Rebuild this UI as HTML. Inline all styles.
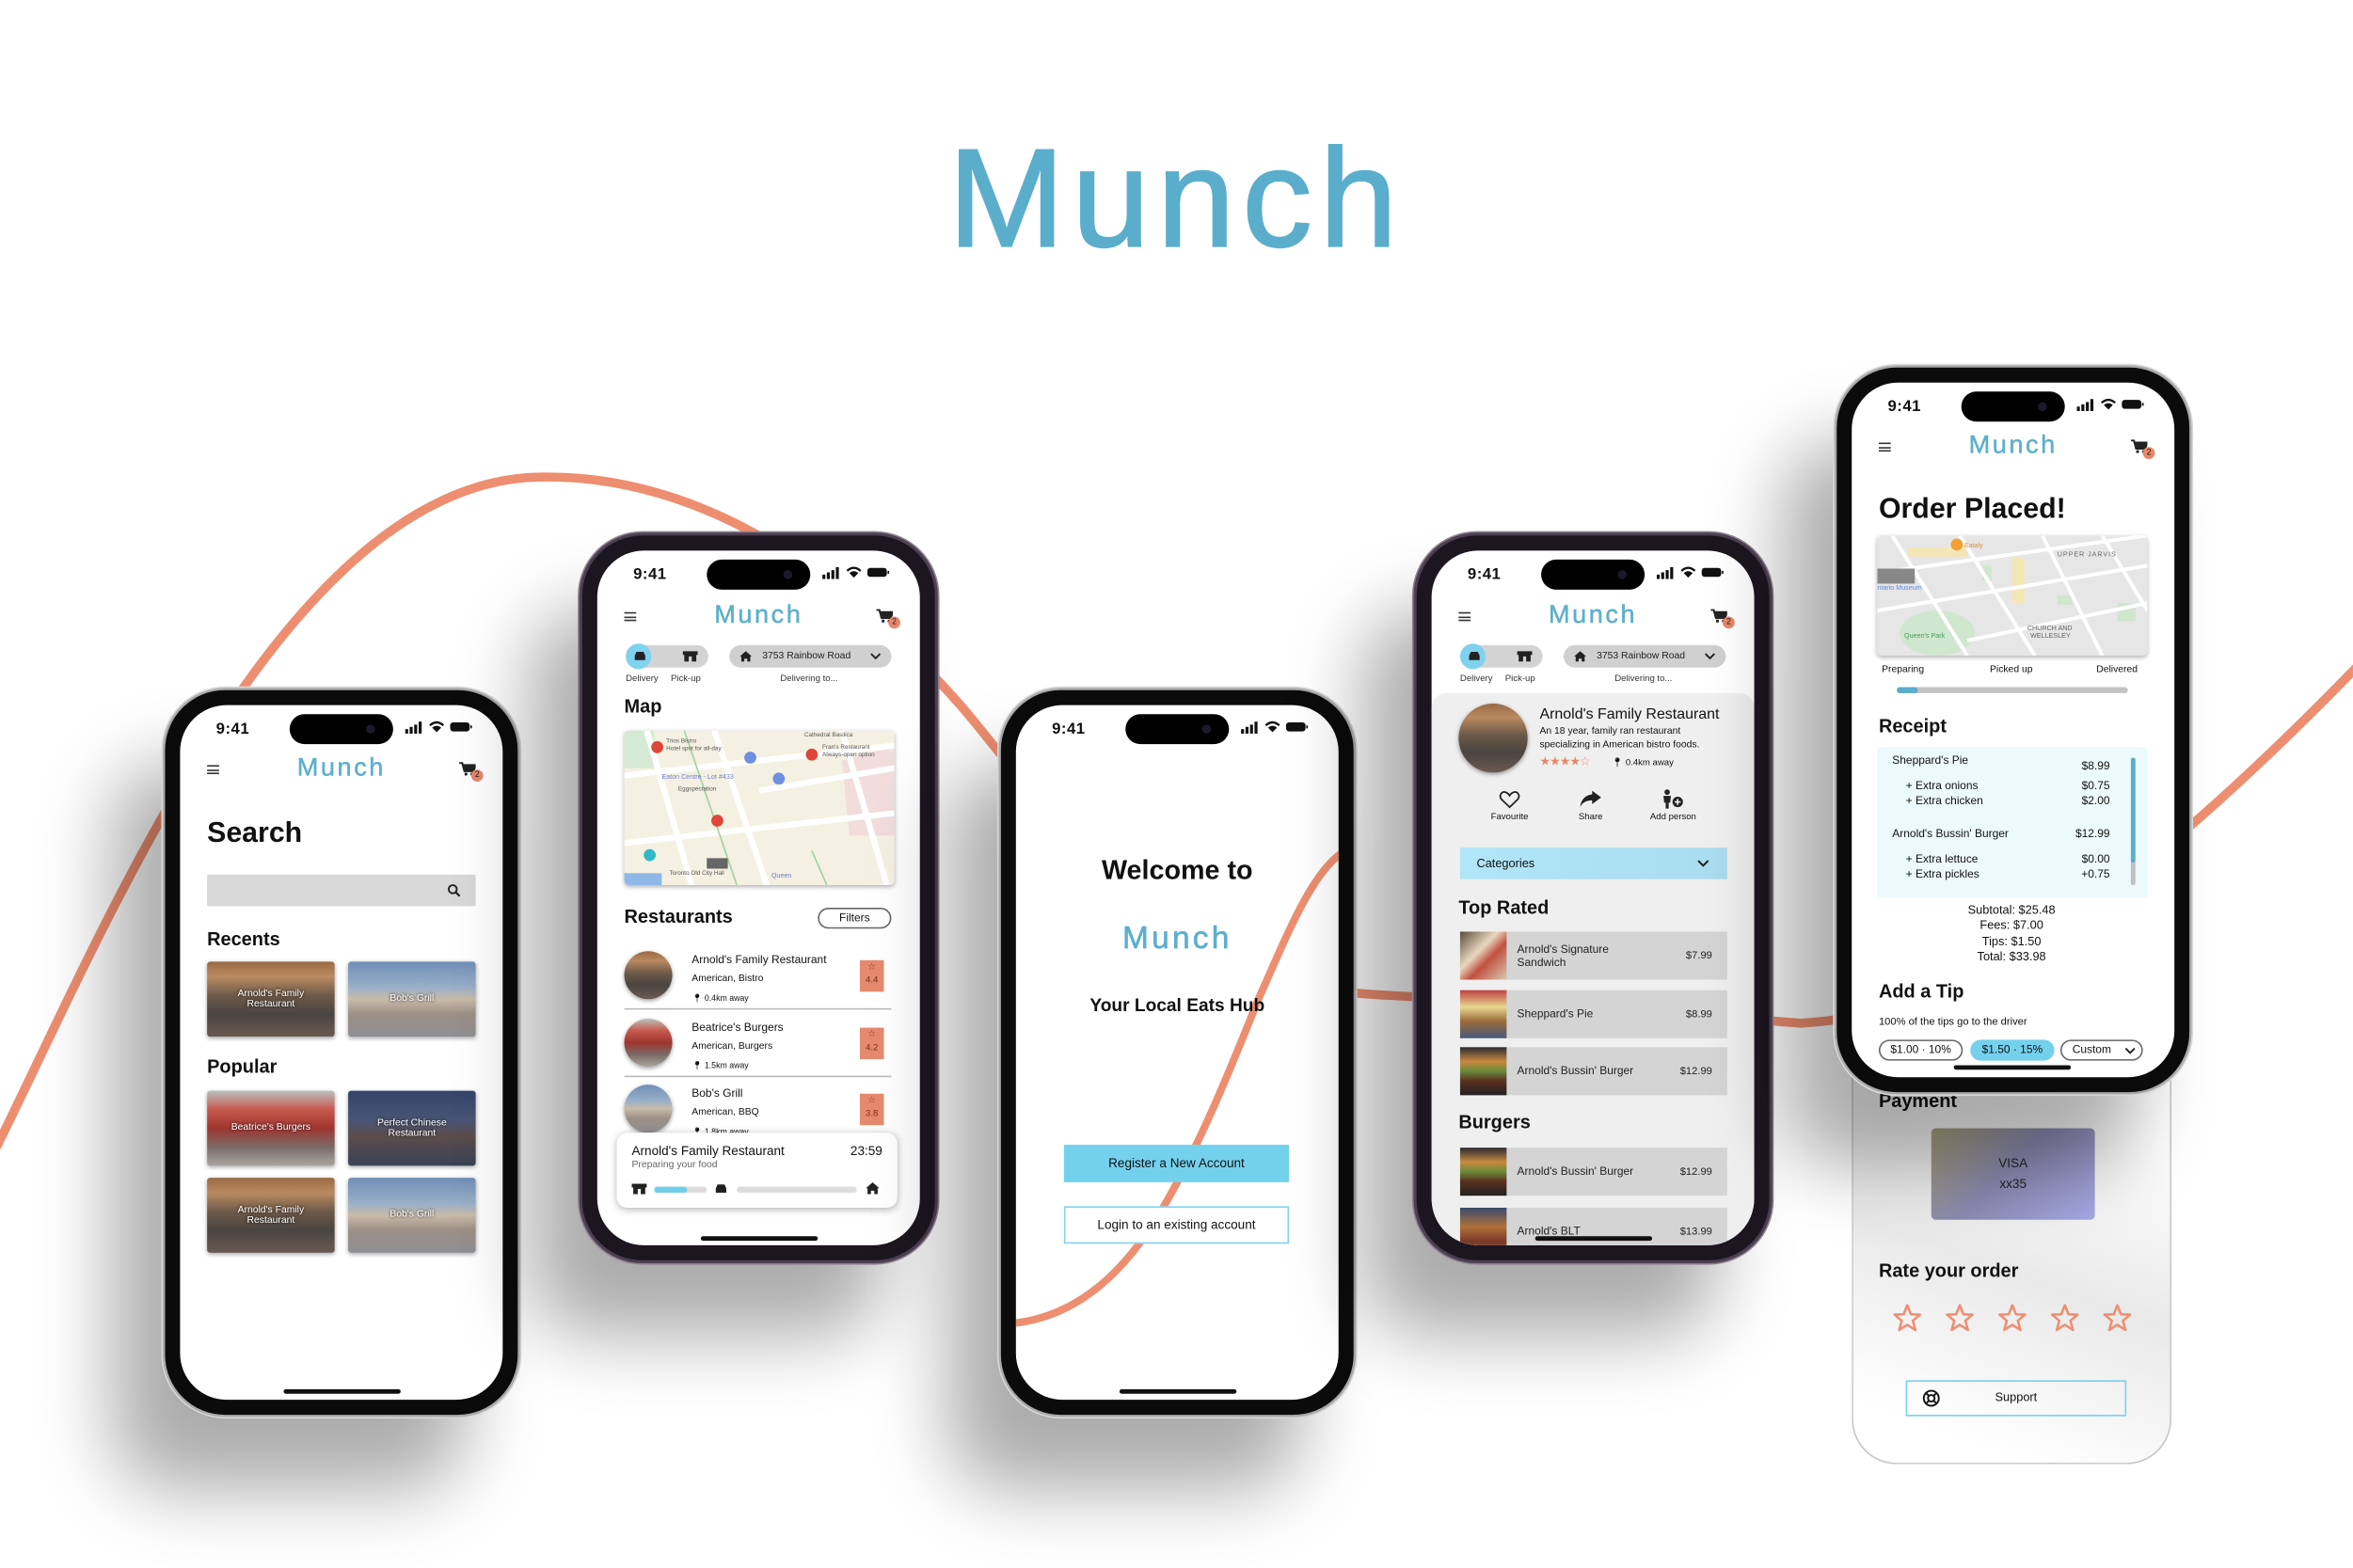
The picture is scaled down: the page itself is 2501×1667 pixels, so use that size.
<!DOCTYPE html>
<html><head><meta charset="utf-8">
<style>
*{margin:0;padding:0;box-sizing:border-box}
html,body{width:2501px;height:1667px;overflow:hidden;background:#fff}
body{font-family:"Liberation Sans",sans-serif;color:#111}
#w{position:absolute;left:0;top:0;width:1568px;height:1045px;transform:scale(1.595);transform-origin:0 0;background:#fff}
.a{position:absolute}
.ph{position:absolute;width:235px;height:483px;border-radius:40px;background:#0b0b0b;box-shadow:0 0 0 1.5px #a9a9a9,0 0 0 2.5px #d8d8d8,-35px 50px 50px rgba(0,0,0,.33)}
.ph.pu{background:#1c1620;box-shadow:0 0 0 2px #4d4052,0 0 0 3px #8d8290,-35px 50px 50px rgba(0,0,0,.33)}
.scr{position:absolute;left:10px;top:10px;width:215px;height:463px;border-radius:31px;background:#fff;overflow:hidden}
.time{left:24px;top:10px;font-size:10.5px;font-weight:bold;letter-spacing:.3px}
.isl{left:73px;top:6px;width:69px;height:20px;border-radius:10px;background:#000}
.isl:after{content:"";position:absolute;right:12px;top:7px;width:6px;height:6px;border-radius:50%;background:#1a1a2a}
.stat{left:150px;top:10px}
.logo{left:0;width:215px;text-align:center;color:#5cb0cc;font-size:17px;letter-spacing:1.6px;-webkit-text-stroke:.3px #5cb0cc}
.ham{left:18px;width:8px;height:6px;border-top:1px solid #333;border-bottom:1px solid #333}
.ham:after{content:"";position:absolute;left:0;top:1.5px;width:8px;height:1px;background:#333}
.badge{width:8px;height:8px;border-radius:50%;background:#e8876a;color:#222;font-size:5.5px;text-align:center;line-height:8px}
.h1{font-weight:bold;font-size:19px}
.h2{font-weight:bold;font-size:12.5px}
.tile{width:85px;height:50px;border-radius:2px;box-shadow:0 1px 3px rgba(0,0,0,.35);color:#fff;font-size:6.5px;text-align:center;display:flex;align-items:center;justify-content:center;text-shadow:0 0 2px #000;line-height:1.15}
.t1{background:linear-gradient(180deg,#9a6a45 0,#b98a60 20%,#6d5a4a 45%,#4a4440 70%,#6a5a52 100%)}
.t2{background:linear-gradient(180deg,#6f8fb5 0,#9bb0c8 35%,#c9bba8 50%,#9c8f86 70%,#8f8f94 100%)}
.t3{background:linear-gradient(180deg,#b9c1bf 0,#c75a4e 25%,#9f3530 50%,#7b6a66 75%,#a8a6a0 100%)}
.t4{background:linear-gradient(180deg,#34456a 0,#4a5575 40%,#5b4d4c 60%,#3a4254 100%)}
.small{font-size:6px;color:#333}
.tog{width:54px;height:15px;border-radius:8px;background:#d3d3d3}
.tog i{position:absolute;left:-1px;top:-1px;width:17px;height:17px;border-radius:50%;background:#7fd2ee}
.addr{height:15px;border-radius:8px;background:#d0d0d0;font-size:6.5px;color:#222;line-height:15px}
.av{width:32px;height:32px;border-radius:50%;box-shadow:0 1px 3px rgba(0,0,0,.4)}
.rb{width:16px;height:21px;background:#e58a6e;font-size:6px;text-align:center;color:#7a2e1a;line-height:9px;padding-top:1px}
.item{left:19px;width:178px;height:32px;background:#d4d4d4;font-size:7.5px;color:#222}
.item .im{position:absolute;left:0;top:0;width:31px;height:32px}
.item .nm{position:absolute;left:38px;top:0;height:32px;display:flex;align-items:center;line-height:1.25}
.item .pr{position:absolute;right:10px;top:0;height:32px;display:flex;align-items:center;font-size:7px}
.pill{height:14px;border-radius:7px;border:1px solid #666;font-size:7.5px;text-align:center;line-height:12px}
</style></head><body><div id="w">

<div class="a" style="left:0;top:82px;width:1568px;text-align:center;font-size:93px;letter-spacing:5px;color:#5aaecb;-webkit-text-stroke:1.3px #5aaecb;line-height:100px">Munch</div>

<svg class="a" style="left:0;top:0" width="1568" height="1045" viewBox="0 0 1568 1045">
<path d="M-5,770 C70,620 190,320 360,318 C470,316 565,385 640,470 C700,540 760,640 840,655 C900,664 960,665 1020,668 L1200,682 C1310,676 1420,600 1575,440" fill="none" stroke="#ee8e70" stroke-width="6"/>
</svg>

<div class="a" style="left:1234px;top:640px;width:213px;height:336px;border:1.2px solid #c5c5c5;border-top:none;border-radius:0 0 30px 30px;background:linear-gradient(200deg,#fff 30%,#e9e9e9 60%,#fff 90%)">
  <div class="a h2" style="left:17px;top:87px">Payment</div>
  <div class="a" style="left:52px;top:112px;width:109px;height:61px;border-radius:3px;background:linear-gradient(135deg,#a9a07a 0,#8a8ab0 45%,#a7a8e6 100%);font-size:8.5px;text-align:center;padding-top:16px;line-height:14px;color:#222">VISA<br>xx35</div>
  <div class="a h2" style="left:17px;top:200px">Rate your order</div>
  <svg class="a" style="left:26px;top:228px" width="170" height="22" viewBox="0 0 170 22">
   <g fill="none" stroke="#ee8e70" stroke-width="1.6" stroke-linejoin="round">
    <path d="M10,2 L12.4,8 L18.5,8.3 L13.7,12.3 L15.4,18.5 L10,15 L4.6,18.5 L6.3,12.3 L1.5,8.3 L7.6,8 Z"/>
    <path transform="translate(35,0)" d="M10,2 L12.4,8 L18.5,8.3 L13.7,12.3 L15.4,18.5 L10,15 L4.6,18.5 L6.3,12.3 L1.5,8.3 L7.6,8 Z"/>
    <path transform="translate(70,0)" d="M10,2 L12.4,8 L18.5,8.3 L13.7,12.3 L15.4,18.5 L10,15 L4.6,18.5 L6.3,12.3 L1.5,8.3 L7.6,8 Z"/>
    <path transform="translate(105,0)" d="M10,2 L12.4,8 L18.5,8.3 L13.7,12.3 L15.4,18.5 L10,15 L4.6,18.5 L6.3,12.3 L1.5,8.3 L7.6,8 Z"/>
    <path transform="translate(140,0)" d="M10,2 L12.4,8 L18.5,8.3 L13.7,12.3 L15.4,18.5 L10,15 L4.6,18.5 L6.3,12.3 L1.5,8.3 L7.6,8 Z"/>
   </g></svg>
  <div class="a" style="left:35px;top:280px;width:147px;height:24px;border:1px solid #72d2f0;font-size:8px;text-align:center;line-height:22px">Support
   <svg class="a" style="left:10px;top:5px" width="12" height="12" viewBox="0 0 12 12"><g fill="none" stroke="#111" stroke-width="1.2"><circle cx="6" cy="6" r="5"/><circle cx="6" cy="6" r="2.2"/><path d="M2.5,2.5 L4.4,4.4 M9.5,2.5 L7.6,4.4 M2.5,9.5 L4.4,7.6 M9.5,9.5 L7.6,7.6"/></g></svg>
  </div>
</div>

<!-- PHONE 1 -->
<div class="ph" style="left:110px;top:460px"><div class="scr">
  <div class="a time">9:41</div><div class="a isl"></div>
  <svg class="a stat" width="46" height="9" viewBox="0 0 46 9"><g fill="#111"><rect x="0" y="6" width="2" height="3"/><rect x="3" y="4.5" width="2" height="4.5"/><rect x="6" y="3" width="2" height="6"/><rect x="9" y="1" width="2" height="8"/><path d="M16,3 Q21,-1.5 26,3 L25,4 Q21,0.5 17,4Z M18,5 Q21,2.5 24,5 L21,8Z"/><rect x="30" y="1.5" width="13" height="6" rx="2"/><rect x="43.5" y="3.5" width="1" height="2"/></g></svg>
  <div class="a ham" style="top:40px"></div>
  <div class="a logo" style="top:32px">Munch</div>
  <svg class="a" style="left:186px;top:38px" width="11" height="9" viewBox="0 0 11 9"><path d="M0,0.5 H2 L3.5,6 H9.5 L11,2 H3" fill="none" stroke="#222" stroke-width="1.3"/><path d="M3,2 H10.5 L9.3,5.5 H4Z" fill="#222"/><circle cx="4.5" cy="8" r="1" fill="#222"/><circle cx="8.5" cy="8" r="1" fill="#222"/></svg>
  <div class="a badge" style="left:194px;top:43px">2</div>
  <div class="a h1" style="left:18px;top:75px">Search</div>
  <div class="a" style="left:18px;top:113px;width:179px;height:21px;background:#d8d8d8;border-radius:1px"></div>
  <svg class="a" style="left:178px;top:119px" width="9" height="9" viewBox="0 0 9 9"><circle cx="3.7" cy="3.7" r="2.7" fill="none" stroke="#222" stroke-width="1.2"/><path d="M5.7,5.7 L8.3,8.3" stroke="#222" stroke-width="1.4"/></svg>
  <div class="a h2" style="left:18px;top:149px">Recents</div>
  <div class="a tile t1" style="left:18px;top:171px">Arnold's Family<br>Restaurant</div>
  <div class="a tile t2" style="left:112px;top:171px">Bob's Grill</div>
  <div class="a h2" style="left:18px;top:234px">Popular</div>
  <div class="a tile t3" style="left:18px;top:257px">Beatrice's Burgers</div>
  <div class="a tile t4" style="left:112px;top:257px">Perfect Chinese<br>Restaurant</div>
  <div class="a tile t1" style="left:18px;top:315px">Arnold's Family<br>Restaurant</div>
  <div class="a tile t2" style="left:112px;top:315px">Bob's Grill</div>
  <div class="a" style="left:69px;top:456px;width:78px;height:3px;border-radius:2px;background:#111"></div>
</div></div>

<!-- PHONE 2 -->
<div class="ph pu" style="left:388px;top:357px"><div class="scr">
  <div class="a time">9:41</div><div class="a isl"></div>
  <svg class="a stat" width="46" height="9" viewBox="0 0 46 9"><g fill="#111"><rect x="0" y="6" width="2" height="3"/><rect x="3" y="4.5" width="2" height="4.5"/><rect x="6" y="3" width="2" height="6"/><rect x="9" y="1" width="2" height="8"/><path d="M16,3 Q21,-1.5 26,3 L25,4 Q21,0.5 17,4Z M18,5 Q21,2.5 24,5 L21,8Z"/><rect x="30" y="1.5" width="13" height="6" rx="2"/><rect x="43.5" y="3.5" width="1" height="2"/></g></svg>
  <div class="a ham" style="top:41px"></div>
  <div class="a logo" style="top:33px">Munch</div>
  <svg class="a" style="left:186px;top:39px" width="11" height="9" viewBox="0 0 11 9"><path d="M0,0.5 H2 L3.5,6 H9.5 L11,2 H3" fill="none" stroke="#222" stroke-width="1.3"/><path d="M3,2 H10.5 L9.3,5.5 H4Z" fill="#222"/><circle cx="4.5" cy="8" r="1" fill="#222"/><circle cx="8.5" cy="8" r="1" fill="#222"/></svg>
  <div class="a badge" style="left:194px;top:44px">2</div>
  <div class="a tog" style="left:20px;top:63px"><i></i>
    <svg class="a" style="left:4px;top:4px" width="9" height="7" viewBox="0 0 9 7"><path d="M1,3 L2.2,0.5 H6.8 L8,3 V6 H1Z" fill="#222"/></svg>
    <svg class="a" style="left:37px;top:4px" width="10" height="7" viewBox="0 0 10 7"><path d="M0,0 H10 V2.5 H9 V7 H6 V3.5 H4 V7 H1 V2.5 H0Z" fill="#222"/></svg>
  </div>
  <div class="a small" style="left:19px;top:83px">Delivery</div>
  <div class="a small" style="left:49px;top:83px">Pick-up</div>
  <div class="a addr" style="left:88px;top:63px;width:108px"><span style="position:absolute;left:22px">3753 Rainbow Road</span>
    <svg class="a" style="left:7px;top:4px" width="8" height="7" viewBox="0 0 8 7"><path d="M4,0 L8,3.5 H7 V7 H5 V5 H3 V7 H1 V3.5 H0Z" fill="#222"/></svg>
    <svg class="a" style="left:94px;top:5px" width="7" height="5" viewBox="0 0 7 5"><path d="M0.5,0.8 L3.5,3.8 L6.5,0.8" fill="none" stroke="#222" stroke-width="1.2"/></svg></div>
  <div class="a small" style="left:122px;top:83px">Delivering to...</div>
  <div class="a h2" style="left:18px;top:97px">Map</div>
  <svg class="a" style="left:18px;top:120px;box-shadow:0 1px 3px rgba(0,0,0,.3);border-radius:3px" width="180" height="103" viewBox="0 0 180 103">
    <rect width="180" height="103" fill="#f4f0e2"/>
    <path d="M145,20 L180,10 V70 L150,70Z" fill="#f2dcdc"/>
    <rect x="0" y="0" width="20" height="25" fill="#d5ead5"/>
    <g stroke="#fff" stroke-width="4" fill="none"><path d="M15,0 L45,103"/><path d="M60,0 L95,103"/><path d="M145,0 L175,103"/><path d="M0,30 L180,10"/><path d="M0,75 L180,55"/><path d="M90,40 L180,25"/></g>
    <g stroke="#9cd49c" stroke-width="1" fill="none"><path d="M40,0 L75,103"/><path d="M125,80 L135,103"/></g>
    <rect x="0" y="95" width="25" height="8" fill="#8fb8e8"/>
    <g fill="#e0453a"><circle cx="22" cy="11" r="4"/><circle cx="62" cy="60" r="4"/><circle cx="125" cy="16" r="4"/></g>
    <g fill="#6f8fe0"><circle cx="84" cy="18" r="4"/><circle cx="103" cy="32" r="4"/></g>
    <circle cx="17" cy="83" r="4" fill="#30b8c8"/>
    <rect x="55" y="85" width="14" height="7" fill="#666"/>
    <g font-size="4" fill="#555" font-family="Liberation Sans"><text x="28" y="8">Trios Bistro</text><text x="28" y="13">Hotel spot for all-day</text><text x="132" y="12">Fran's Restaurant</text><text x="132" y="17">Always-open option</text><text x="36" y="40">Eggspectation</text><text x="30" y="96">Toronto Old City Hall</text><text x="120" y="4">Cathedral Basilica</text></g>
    <text x="25" y="32" font-size="4.5" fill="#6f7fd0" font-family="Liberation Sans">Eaton Centre - Lot #433</text>
    <text x="98" y="98" font-size="4.5" fill="#6f7fd0" font-family="Liberation Sans">Queen</text>
  </svg>
  <div class="a h2" style="left:18px;top:237px">Restaurants</div>
  <div class="a pill" style="left:147px;top:238px;width:49px;font-size:7.5px">Filters</div>
  <div class="a av t1" style="left:18px;top:267px"></div>
  <div class="a" style="left:63px;top:267px;font-size:7.5px;line-height:12px">Arnold's Family Restaurant<br><span style="font-size:6.5px">American, Bistro</span><br><span style="font-size:5.5px">&#x1F4CD;&#xFE0E; 0.4km away</span></div>
  <div class="a rb" style="left:175px;top:273px">☆<br>4.4</div>
  <div class="a" style="left:18px;top:305px;width:178px;height:1px;background:#bbb"></div>
  <div class="a av t3" style="left:18px;top:312px"></div>
  <div class="a" style="left:63px;top:312px;font-size:7.5px;line-height:12px">Beatrice's Burgers<br><span style="font-size:6.5px">American, Burgers</span><br><span style="font-size:5.5px">&#x1F4CD;&#xFE0E; 1.5km away</span></div>
  <div class="a rb" style="left:175px;top:318px">☆<br>4.2</div>
  <div class="a" style="left:18px;top:350px;width:178px;height:1px;background:#bbb"></div>
  <div class="a av t2" style="left:18px;top:356px"></div>
  <div class="a" style="left:63px;top:356px;font-size:7.5px;line-height:12px">Bob's Grill<br><span style="font-size:6.5px">American, BBQ</span><br><span style="font-size:5.5px">&#x1F4CD;&#xFE0E; 1.8km away</span></div>
  <div class="a rb" style="left:175px;top:362px">☆<br>3.8</div>
  <div class="a" style="left:13px;top:388px;width:187px;height:50px;border-radius:7px;background:#fff;box-shadow:0 1px 5px rgba(0,0,0,.3)">
    <div class="a" style="left:10px;top:7px;font-size:8.5px">Arnold's Family Restaurant</div>
    <div class="a" style="right:10px;top:7px;font-size:8.5px">23:59</div>
    <div class="a" style="left:10px;top:18px;font-size:6.5px;color:#666">Preparing your food</div>
    <svg class="a" style="left:10px;top:34px" width="10" height="7" viewBox="0 0 10 7"><path d="M0,0 H10 V2.5 H9 V7 H6 V3.5 H4 V7 H1 V2.5 H0Z" fill="#222"/></svg>
    <div class="a" style="left:25px;top:36px;width:35px;height:4px;border-radius:2px;background:#ddd"><div style="width:22px;height:4px;border-radius:2px;background:#6fcfea"></div></div>
    <svg class="a" style="left:65px;top:34px" width="9" height="7" viewBox="0 0 9 7"><path d="M1,3 L2.2,0.5 H6.8 L8,3 V6 H1Z" fill="#222"/></svg>
    <div class="a" style="left:80px;top:36px;width:80px;height:4px;border-radius:2px;background:#ddd"></div>
    <svg class="a" style="left:166px;top:33px" width="9" height="8" viewBox="0 0 8 7"><path d="M4,0 L8,3.5 H7 V7 H5 V5 H3 V7 H1 V3.5 H0Z" fill="#222"/></svg>
  </div>
  <div class="a" style="left:69px;top:457px;width:78px;height:3px;border-radius:2px;background:#111"></div>
</div></div>

<!-- PHONE 3 -->
<div class="ph" style="left:667px;top:460px"><div class="scr">
  <div class="a time">9:41</div><div class="a isl"></div>
  <svg class="a stat" width="46" height="9" viewBox="0 0 46 9"><g fill="#111"><rect x="0" y="6" width="2" height="3"/><rect x="3" y="4.5" width="2" height="4.5"/><rect x="6" y="3" width="2" height="6"/><rect x="9" y="1" width="2" height="8"/><path d="M16,3 Q21,-1.5 26,3 L25,4 Q21,0.5 17,4Z M18,5 Q21,2.5 24,5 L21,8Z"/><rect x="30" y="1.5" width="13" height="6" rx="2"/><rect x="43.5" y="3.5" width="1" height="2"/></g></svg>
  <svg class="a" style="left:0;top:0" width="215" height="463" viewBox="0 0 215 463"><path d="M218,98 C196,112 178,160 162,195 C142,245 120,300 92,345 C68,382 38,408 -2,412" fill="none" stroke="#ee8e70" stroke-width="5"/></svg>
  <div class="a" style="left:0;top:100px;width:215px;text-align:center;font-size:18px;font-weight:bold">Welcome to</div>
  <div class="a" style="left:0;top:144px;width:215px;text-align:center;font-size:21px;letter-spacing:2px;color:#5cb0cc;-webkit-text-stroke:.4px #5cb0cc">Munch</div>
  <div class="a" style="left:0;top:193px;width:215px;text-align:center;font-size:12px;font-weight:bold">Your Local Eats Hub</div>
  <div class="a" style="left:32px;top:293px;width:150px;height:25px;background:#74d1ee;font-size:8.5px;text-align:center;line-height:25px">Register a New Account</div>
  <div class="a" style="left:32px;top:334px;width:150px;height:25px;background:#fff;border:1px solid #7fd3ee;font-size:8.5px;text-align:center;line-height:23px">Login to an existing account</div>
  <div class="a" style="left:69px;top:456px;width:78px;height:3px;border-radius:2px;background:#111"></div>
</div></div>

<!-- PHONE 4 -->
<div class="ph pu" style="left:944px;top:357px"><div class="scr">
  <div class="a time">9:41</div><div class="a isl"></div>
  <svg class="a stat" width="46" height="9" viewBox="0 0 46 9"><g fill="#111"><rect x="0" y="6" width="2" height="3"/><rect x="3" y="4.5" width="2" height="4.5"/><rect x="6" y="3" width="2" height="6"/><rect x="9" y="1" width="2" height="8"/><path d="M16,3 Q21,-1.5 26,3 L25,4 Q21,0.5 17,4Z M18,5 Q21,2.5 24,5 L21,8Z"/><rect x="30" y="1.5" width="13" height="6" rx="2"/><rect x="43.5" y="3.5" width="1" height="2"/></g></svg>
  <div class="a ham" style="top:41px"></div>
  <div class="a logo" style="top:33px">Munch</div>
  <svg class="a" style="left:186px;top:39px" width="11" height="9" viewBox="0 0 11 9"><path d="M0,0.5 H2 L3.5,6 H9.5 L11,2 H3" fill="none" stroke="#222" stroke-width="1.3"/><path d="M3,2 H10.5 L9.3,5.5 H4Z" fill="#222"/><circle cx="4.5" cy="8" r="1" fill="#222"/><circle cx="8.5" cy="8" r="1" fill="#222"/></svg>
  <div class="a badge" style="left:194px;top:44px">2</div>
  <div class="a tog" style="left:20px;top:63px"><i></i>
    <svg class="a" style="left:4px;top:4px" width="9" height="7" viewBox="0 0 9 7"><path d="M1,3 L2.2,0.5 H6.8 L8,3 V6 H1Z" fill="#222"/></svg>
    <svg class="a" style="left:37px;top:4px" width="10" height="7" viewBox="0 0 10 7"><path d="M0,0 H10 V2.5 H9 V7 H6 V3.5 H4 V7 H1 V2.5 H0Z" fill="#222"/></svg>
  </div>
  <div class="a small" style="left:19px;top:83px">Delivery</div>
  <div class="a small" style="left:49px;top:83px">Pick-up</div>
  <div class="a addr" style="left:88px;top:63px;width:108px"><span style="position:absolute;left:22px">3753 Rainbow Road</span>
    <svg class="a" style="left:7px;top:4px" width="8" height="7" viewBox="0 0 8 7"><path d="M4,0 L8,3.5 H7 V7 H5 V5 H3 V7 H1 V3.5 H0Z" fill="#222"/></svg>
    <svg class="a" style="left:94px;top:5px" width="7" height="5" viewBox="0 0 7 5"><path d="M0.5,0.8 L3.5,3.8 L6.5,0.8" fill="none" stroke="#222" stroke-width="1.2"/></svg></div>
  <div class="a small" style="left:122px;top:83px">Delivering to...</div>
  <div class="a" style="left:0;top:95px;width:215px;height:380px;background:#efefef;border-radius:10px 10px 0 0"></div>
  <div class="a t1" style="left:18px;top:102px;width:46px;height:46px;border-radius:50%;box-shadow:0 1px 3px rgba(0,0,0,.4)"></div>
  <div class="a" style="left:72px;top:104px;font-size:10px">Arnold's Family Restaurant</div>
  <div class="a" style="left:72px;top:117px;font-size:6.5px;line-height:8.5px">An 18 year, family ran restaurant<br>specializing in American bistro foods.</div>
  <div class="a" style="left:72px;top:136px;font-size:8px;color:#e8876a;letter-spacing:-.5px">★★★★☆</div>
  <div class="a" style="left:120px;top:138px;font-size:6px">&#x1F4CD;&#xFE0E; 0.4km away</div>
  <svg class="a" style="left:45px;top:160px" width="14" height="12" viewBox="0 0 14 12"><path d="M7,11 L1.8,6 C-0.5,3.6 1.5,0.5 4,1 C5.5,1.3 6.5,2.5 7,3.3 C7.5,2.5 8.5,1.3 10,1 C12.5,0.5 14.5,3.6 12.2,6Z" fill="none" stroke="#222" stroke-width="1.1"/></svg>
  <div class="a" style="left:30px;top:175px;width:44px;text-align:center;font-size:6px">Favourite</div>
  <svg class="a" style="left:99px;top:160px" width="14" height="11" viewBox="0 0 14 11"><path d="M8,0 L14,4.5 L8,9 V6.5 C4,6.5 1.5,8 0,11 C0.5,6 3.5,3 8,2.5Z" fill="#222"/></svg>
  <div class="a" style="left:84px;top:175px;width:44px;text-align:center;font-size:6px">Share</div>
  <svg class="a" style="left:153px;top:159px" width="15" height="13" viewBox="0 0 15 13"><circle cx="4" cy="2" r="1.8" fill="#222"/><path d="M1.5,4.5 H6.5 L6,9 H5 V13 H3 V9 H2Z" fill="#222"/><circle cx="11" cy="8.5" r="3.5" fill="#222"/><path d="M11,6.5 V10.5 M9,8.5 H13" stroke="#efefef" stroke-width="1"/></svg>
  <div class="a" style="left:136px;top:175px;width:50px;text-align:center;font-size:6px">Add person</div>
  <div class="a" style="left:19px;top:198px;width:178px;height:21px;background:linear-gradient(90deg,#b0e6f8,#a9dcee);font-size:8px;line-height:21px;padding-left:11px">Categories
    <svg class="a" style="left:158px;top:8px" width="8" height="5" viewBox="0 0 8 5"><path d="M0.7,0.7 L4,4 L7.3,0.7" fill="none" stroke="#222" stroke-width="1.3"/></svg></div>
  <div class="a h2" style="left:18px;top:231px">Top Rated</div>
  <div class="a item" style="top:254px"><div class="im" style="background:linear-gradient(135deg,#5a4a3a,#e8d8c0 40%,#c05040 60%,#d8c8b0)"></div><div class="nm">Arnold's Signature<br>Sandwich</div><div class="pr">$7.99</div></div>
  <div class="a item" style="top:293px"><div class="im" style="background:linear-gradient(180deg,#c04040,#e8d890 35%,#9a6a3a 65%,#4a5a7a)"></div><div class="nm">Sheppard's Pie</div><div class="pr">$8.99</div></div>
  <div class="a item" style="top:331px"><div class="im" style="background:linear-gradient(180deg,#2a2a30,#c88a40 30%,#6a8a3a 50%,#5a3020 70%,#222)"></div><div class="nm">Arnold's Bussin' Burger</div><div class="pr">$12.99</div></div>
  <div class="a h2" style="left:18px;top:374px">Burgers</div>
  <div class="a item" style="top:398px"><div class="im" style="background:linear-gradient(180deg,#2a2a30,#c88a40 30%,#6a8a3a 50%,#5a3020 70%,#222)"></div><div class="nm">Arnold's Bussin' Burger</div><div class="pr">$12.99</div></div>
  <div class="a item" style="top:438px"><div class="im" style="background:linear-gradient(180deg,#3a4a6a,#b0703a 40%,#7a3a2a 70%)"></div><div class="nm">Arnold's BLT</div><div class="pr">$13.99</div></div>
  <div class="a" style="left:69px;top:457px;width:78px;height:3px;border-radius:2px;background:#111"></div>
</div></div>

<!-- PHONE 5 -->
<div class="ph" style="left:1224px;top:245px"><div class="scr">
  <div class="a time">9:41</div><div class="a isl"></div>
  <svg class="a stat" width="46" height="9" viewBox="0 0 46 9"><g fill="#111"><rect x="0" y="6" width="2" height="3"/><rect x="3" y="4.5" width="2" height="4.5"/><rect x="6" y="3" width="2" height="6"/><rect x="9" y="1" width="2" height="8"/><path d="M16,3 Q21,-1.5 26,3 L25,4 Q21,0.5 17,4Z M18,5 Q21,2.5 24,5 L21,8Z"/><rect x="30" y="1.5" width="13" height="6" rx="2"/><rect x="43.5" y="3.5" width="1" height="2"/></g></svg>
  <div class="a ham" style="top:40px"></div>
  <div class="a logo" style="top:32px">Munch</div>
  <svg class="a" style="left:186px;top:38px" width="11" height="9" viewBox="0 0 11 9"><path d="M0,0.5 H2 L3.5,6 H9.5 L11,2 H3" fill="none" stroke="#222" stroke-width="1.3"/><path d="M3,2 H10.5 L9.3,5.5 H4Z" fill="#222"/><circle cx="4.5" cy="8" r="1" fill="#222"/><circle cx="8.5" cy="8" r="1" fill="#222"/></svg>
  <div class="a badge" style="left:194px;top:43px">2</div>
  <div class="a h1" style="left:18px;top:74px">Order Placed!</div>
  <svg class="a" style="left:17px;top:102px;box-shadow:0 1px 3px rgba(0,0,0,.3);border-radius:3px" width="180" height="80" viewBox="0 0 180 80">
    <rect width="180" height="80" fill="#e6e6e6"/>
    <ellipse cx="40" cy="65" rx="25" ry="15" fill="#cfe6cf"/>
    <g fill="#cfe6cf"><rect x="70" y="20" width="6" height="10"/><rect x="120" y="40" width="10" height="6"/><rect x="160" y="45" width="12" height="12"/></g>
    <g fill="#f5e6b5"><rect x="90" y="15" width="8" height="30"/><rect x="20" y="8" width="40" height="6"/></g>
    <g stroke="#fff" stroke-width="2.5" fill="none"><path d="M10,0 L60,80"/><path d="M55,0 L105,80"/><path d="M110,0 L150,80"/><path d="M150,0 L180,50"/><path d="M0,25 L180,0"/><path d="M0,50 L180,20"/><path d="M60,70 L180,45"/></g>
    <rect x="0" y="22" width="25" height="10" fill="#888"/>
    <circle cx="53" cy="6" r="4" fill="#f5a030"/>
    <g font-family="Liberation Sans" font-size="4.5"><text x="58" y="8" fill="#e09030">Eataly</text><text x="120" y="14" fill="#666" letter-spacing=".6">UPPER JARVIS</text><text x="100" y="63" fill="#666">CHURCH AND</text><text x="102" y="68" fill="#666">WELLESLEY</text><text x="18" y="68" fill="#4a9a5a">Queen's Park</text><text x="0" y="36" fill="#5a8ae0">ntario Museum</text></g>
  </svg>
  <div class="a" style="left:20px;top:188px;font-size:6.5px">Preparing</div>
  <div class="a" style="left:92px;top:188px;font-size:6.5px">Picked up</div>
  <div class="a" style="left:163px;top:188px;font-size:6.5px">Delivered</div>
  <div class="a" style="left:30px;top:203px;width:154px;height:4px;border-radius:2px;background:#c3c3c3"><div style="width:14px;height:4px;border-radius:2px;background:#58aecb"></div></div>
  <div class="a h2" style="left:18px;top:222px">Receipt</div>
  <div class="a" style="left:17px;top:243px;width:180px;height:100px;background:#ecf9fd;font-size:7.5px;line-height:10px">
    <div class="a" style="left:10px;top:4px">Sheppard's Pie</div><div class="a" style="right:25px;top:8px">$8.99</div>
    <div class="a" style="left:19px;top:21px">+ Extra onions<br>+ Extra chicken</div><div class="a" style="right:25px;top:21px;text-align:right">$0.75<br>$2.00</div>
    <div class="a" style="left:10px;top:53px">Arnold's Bussin' Burger</div><div class="a" style="right:25px;top:53px">$12.99</div>
    <div class="a" style="left:19px;top:70px">+ Extra lettuce<br>+ Extra pickles</div><div class="a" style="right:25px;top:70px;text-align:right">$0.00<br>+0.75</div>
    <div class="a" style="left:169px;top:7px;width:3px;height:85px;border-radius:2px;background:#c0c0c0"><div style="width:3px;height:70px;border-radius:2px;background:#5aaecb"></div></div>
  </div>
  <div class="a" style="left:0;top:347px;width:213px;text-align:center;font-size:8px;line-height:10.4px">Subtotal: $25.48<br>Fees: $7.00<br>Tips: $1.50<br>Total: $33.98</div>
  <div class="a h2" style="left:18px;top:399px">Add a Tip</div>
  <div class="a" style="left:18px;top:423px;font-size:7px">100% of the tips go to the driver</div>
  <div class="a pill" style="left:18px;top:438px;width:56px">$1.00 · 10%</div>
  <div class="a pill" style="left:79px;top:438px;width:56px;background:#74d1ee;border-color:#74d1ee">$1.50 · 15%</div>
  <div class="a pill" style="left:139px;top:438px;width:55px;text-align:left;padding-left:7px">Custom
    <svg class="a" style="left:42px;top:4px" width="7" height="5" viewBox="0 0 7 5"><path d="M0.5,0.8 L3.5,3.8 L6.5,0.8" fill="none" stroke="#222" stroke-width="1.2"/></svg></div>
  <div class="a" style="left:68px;top:455px;width:78px;height:3px;border-radius:2px;background:#111"></div>
</div></div>

</div></body></html>
